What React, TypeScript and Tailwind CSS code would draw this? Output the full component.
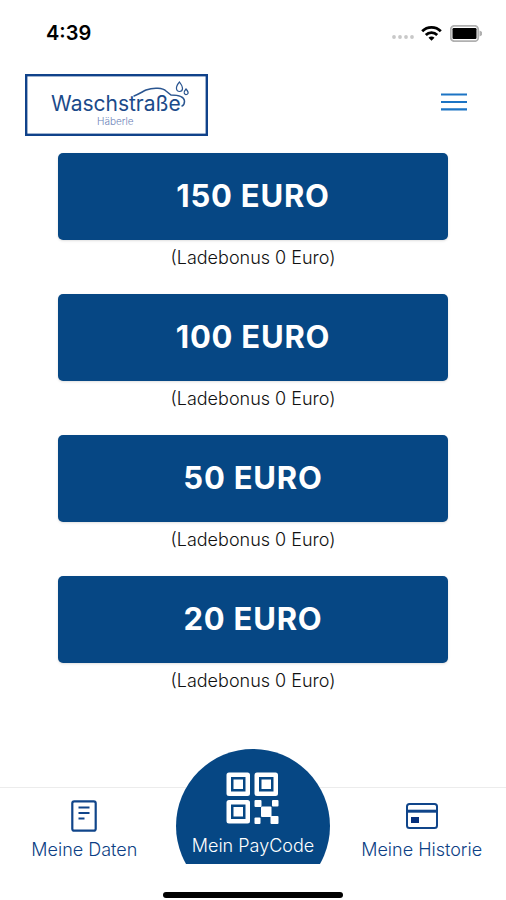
const amounts = [150, 100, 50, 20];

function StatusBar() {
  return (
    <div className="flex h-[66px] items-center justify-between pl-[46px] pr-6">
      <span className="text-xl font-semibold text-black">4:39</span>
      <div className="flex items-center">
        <svg className="mr-1.5 mt-2 h-1 w-6" viewBox="0 0 24 4" fill="#c8c8c8">
          <circle cx="3" cy="2" r="1.9" />
          <circle cx="9" cy="2" r="1.9" />
          <circle cx="15" cy="2" r="1.9" />
          <circle cx="21" cy="2" r="1.9" />
        </svg>
        <svg className="mr-2 h-4 w-[21px]" viewBox="0 0 21 16" fill="none" stroke="#000" strokeWidth="2.8">
          <path d="M1.2 6.2a13.2 13.2 0 0 1 18.6 0" />
          <path d="M4.8 9.9a8.1 8.1 0 0 1 11.4 0" />
          <path d="M10.5 15.8l-3-3a4.2 4.2 0 0 1 6 0z" fill="#000" stroke="none" />
        </svg>
        <svg className="h-[17px] w-8" viewBox="0 0 32 17">
          <rect x="0.8" y="0.8" width="27.4" height="15.4" rx="3.5" fill="#fff" stroke="#b0b0b0" strokeWidth="1.8" />
          <rect x="2.5" y="3" width="24" height="11" rx="1.2" fill="#000" />
          <path d="M29.5 5.5v6q3-1 3-3t-3-3z" fill="#b0b0b0" />
        </svg>
      </div>
    </div>
  );
}

function Logo() {
  return (
    <svg className="h-[62px] w-[183px]" viewBox="0 0 183 62" role="img" aria-label="Waschstraße Häberle">
      <rect x="1.2" y="1.2" width="180.6" height="59.6" fill="#fff" stroke="#10428a" strokeWidth="2.4" />
      <text x="26" y="37" fontSize="21" fill="#1b4a8a">
        Waschstraße
      </text>
      <text x="72" y="51" fontSize="10" fill="#6b7fb8" className="font-light">
        Häberle
      </text>
      <g fill="none" stroke="#2a5590" strokeWidth="1.5" strokeLinecap="round">
        <path d="M109 22C114 20 117 18 121 16C129 13 138 14 141 17L146 21C154 21 159 23 159.5 27Q159.500 31 157 32" />
        <path d="M154.5 8Q151 12 151.5 15Q152 17.5 154.5 17.5Q157.5 17.5 157.5 14.5Q157.5 12 154.5 8z" strokeWidth="1.2" />
        <path d="M161 15Q158.8 17.5 159.2 19Q160 21 161.6 20.5Q163.5 20 163 18Q162.7 17 161 15z" strokeWidth="1.2" />
      </g>
    </svg>
  );
}

function Header() {
  return (
    <header className="flex items-start justify-between pl-[25px] pr-[38px] pt-2">
      <a href="#home">
        <Logo />
      </a>
      <button type="button" aria-label="Menü" className="mt-[19px]">
        <svg className="h-[18px] w-7" viewBox="0 0 28 18" stroke="#1c74c4" strokeWidth="2.2">
          <path d="M1 1.5h26M1 9h26M1 16.3h26" />
        </svg>
      </button>
    </header>
  );
}

function QrIcon() {
  return (
    <svg className="h-[54px] w-[54px]" viewBox="0 0 54 54" fill="#fff">
      <path
        fillRule="evenodd"
        d="M3 .5h18.5a2.5 2.5 0 0 1 2.5 2.5v18.5a2.5 2.5 0 0 1-2.5 2.5h-18.5a2.5 2.5 0 0 1-2.5-2.5v-18.5a2.5 2.5 0 0 1 2.5-2.5zM5 5v14.5h14.5v-14.5z"
      />
      <path
        fillRule="evenodd"
        d="M31 .5h18.5a2.5 2.5 0 0 1 2.5 2.5v18.5a2.5 2.5 0 0 1-2.5 2.5h-18.5a2.5 2.5 0 0 1-2.5-2.5v-18.5a2.5 2.5 0 0 1 2.5-2.5zM33 5v14.5h14.5v-14.5z"
      />
      <path
        fillRule="evenodd"
        d="M3 28h18.5a2.5 2.5 0 0 1 2.5 2.5v18.5a2.5 2.5 0 0 1-2.5 2.5h-18.5a2.5 2.5 0 0 1-2.5-2.5v-18.5a2.5 2.5 0 0 1 2.5-2.5zM5 32.5v14.5h14.5v-14.5z"
      />
      <rect x="7.5" y="7.5" width="9.5" height="9.5" />
      <rect x="35.5" y="7.5" width="9.5" height="9.5" />
      <rect x="7.5" y="35" width="9.5" height="9.5" />
      <rect x="28.5" y="28" width="7" height="7" rx="1" />
      <rect x="46" y="28" width="6.5" height="6.5" rx="1" />
      <rect x="35" y="34.5" width="10.5" height="10.5" rx="1" />
      <rect x="28.5" y="45.5" width="6" height="6.5" rx="1" />
      <rect x="44.5" y="44" width="8" height="8" rx="1" />
    </svg>
  );
}

function TabBar() {
  return (
    <nav className="grid grid-cols-3 items-end border-t border-[#ececec] text-lg font-light text-[#0d3f85]">
      <a href="#daten" className="flex flex-col items-center gap-1">
        <svg className="h-8 w-[26px]" viewBox="0 0 26 32" fill="none" stroke="#10458a" strokeWidth="2.2">
          <rect x="1.3" y="1.3" width="23.4" height="29.4" rx="2" />
          <path d="M7.5 7.5h11M7.5 13h11M7.5 18.5h6" />
        </svg>
        <span className="leading-7">Meine Daten</span>
      </a>
      {/* the round button rises above the bar and is cut off at its lower edge */}
      <div className="-mt-[39px] h-[115px] w-[154px] justify-self-center overflow-hidden">
        <button
          type="button"
          className="flex h-[154px] w-[154px] flex-col items-center rounded-full bg-[#064784] pt-[23px] text-white"
        >
          <QrIcon />
          <span className="leading-10">Mein PayCode</span>
        </button>
      </div>
      <a href="#historie" className="flex flex-col items-center gap-1">
        <svg className="h-[30px] w-[34px]" viewBox="0 0 34 30" fill="none" stroke="#10458a" strokeWidth="2">
          <rect x="2" y="2" width="30" height="24" rx="2.5" />
          <path d="M2 9.2h30" strokeWidth="3" />
          <rect x="6" y="15" width="8" height="6" fill="#06307c" stroke="none" />
        </svg>
        <span className="leading-7">Meine Historie</span>
      </a>
    </nav>
  );
}

export default function App() {
  return (
    <div className="flex min-h-screen flex-col bg-white font-['Inter','Liberation_Sans',sans-serif]">
      <StatusBar />
      <Header />
      <main className="flex flex-1 flex-col gap-[18px] px-[58px] pb-10 pt-[17px]">
        {amounts.map((amount) => (
          <div key={amount} className="flex flex-col text-center">
            <button
              type="button"
              className="h-[87px] rounded-[5px] bg-[#064784] text-[31px] font-bold tracking-wide text-white shadow-sm"
            >
              {amount} EURO
            </button>
            <p className="text-lg font-light leading-9 text-[#111]">(Ladebonus 0 Euro)</p>
          </div>
        ))}
      </main>
      <TabBar />
      <div className="flex h-9 items-end justify-center pb-0.5">
        <div className="h-1.5 w-[180px] rounded-full bg-black" />
      </div>
    </div>
  );
}
